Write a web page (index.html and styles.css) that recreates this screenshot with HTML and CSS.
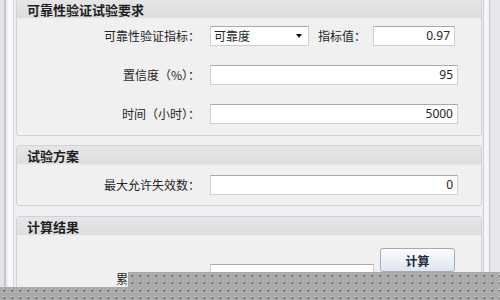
FILE: index.html
```html
<!DOCTYPE html>
<html lang="zh-CN">

<head>
    <meta charset="UTF-8" />
    <title>可靠性验证试验</title>
    <link rel="stylesheet" href="styles.css">
</head>

<body>
    <div id="window">
        <div class="edge-left"></div>

        <div id="content">
            <section class="group first">
                <div class="group-title">可靠性验证试验要求</div>
                <div class="group-body">
                    <div class="row">
                        <span class="label">可靠性验证指标：</span>
                        <div class="select">可靠度<span class="caret"></span></div>
                        <span class="label-inline">指标值：</span>
                        <div class="field short">0.97</div>
                    </div>
                    <div class="row">
                        <span class="label">置信度（%）：</span>
                        <div class="field wide">95</div>
                    </div>
                    <div class="row">
                        <span class="label">时间（小时）：</span>
                        <div class="field wide">5000</div>
                    </div>
                </div>
            </section>

            <section class="group second">
                <div class="group-title">试验方案</div>
                <div class="group-body">
                    <div class="row">
                        <span class="label">最大允许失效数：</span>
                        <div class="field wide">0</div>
                    </div>
                </div>
            </section>

            <section class="group third">
                <div class="group-title">计算结果</div>
                <div class="group-body result">
                    <span class="label">累积失效概率：</span>
                    <div class="field result-field"></div>
                    <button class="calc">计算</button>
                </div>
            </section>
        </div>

        <div class="edge-right"></div>

        <svg class="veil" width="500" height="28" viewBox="0 0 500 28">
            <defs>
                <pattern id="dots" width="8" height="7.5" patternUnits="userSpaceOnUse">
                    <rect width="8" height="7.5" fill="#ababab" />
                    <rect x="3" y="2" width="1" height="1" fill="#ffffff" />
                    <rect x="4" y="3" width="1" height="1" fill="#1a1a1a" />
                    <rect x="3" y="3" width="1" height="1" fill="#555555" />
                </pattern>
            </defs>
            <polygon points="128,0 500,0 500,28 0,28 0,15 128,15" fill="url(#dots)" />
        </svg>
    </div>
</body>

</html>
```

FILE: styles.css
```css
* {
    box-sizing: border-box;
    margin: 0;
    padding: 0;
}

body {
    width: 500px;
    height: 300px;
    overflow: hidden;
    background-color: #f0f0f2;
    font-family: "Noto Sans CJK SC", "Noto Sans", sans-serif;
    font-size: 12px;
    color: #262626;
}

#window {
    position: relative;
    display: flex;
    height: 300px;
}

.edge-left {
    width: 16px;
    flex-shrink: 0;
    background: linear-gradient(to right,
            #e4e4ea 0 4px, #c6c6ce 4px 6px, #ececf1 6px 8px,
            #f8f8fb 8px 13px, #d6d6dc 13px 14px, #ededf1 14px 16px);
}

.edge-right {
    width: 18px;
    flex-shrink: 0;
    background: linear-gradient(to right,
            #ececf0 0 1px, #cdcdd4 1px 2px, #f6f6f9 2px 7px,
            #c4c4cc 7px 8px, #e6e6ec 8px 18px);
}

#content {
    flex: 1;
    display: flex;
    flex-direction: column;
}

.group {
    border: 1px solid #d2d2d6;
    border-radius: 3px;
    background-color: #f0f0f1;
}

.group.first {
    margin-top: -1px;
}

.group.second {
    margin-top: 9px;
}

.group.third {
    margin-top: 10px;
}

.group-title {
    height: 19px;
    line-height: 19px;
    padding-left: 10px;
    font-size: 13px;
    font-weight: bold;
    color: #1e1e1e;
    background: linear-gradient(#e6e6e8, #dededf);
    border-bottom: 1px solid #ececee;
}

.group-body {
    display: flex;
    flex-direction: column;
    gap: 19px;
    padding: 10px 0 10px;
}

.group.first .group-body {
    padding: 7px 0 11px;
}

.row {
    display: flex;
    align-items: center;
    height: 20px;
}

.label {
    width: 183px;
    margin-right: 10px;
    text-align: right;
    line-height: 20px;
    white-space: nowrap;
}

.label-inline {
    margin: 0 7px 0 9px;
    line-height: 20px;
}

.field,
.select {
    height: 20px;
    line-height: 18px;
    background-color: #ffffff;
    border: 1px solid #cfcfd2;
    border-top-color: #a9a9ad;
    font-family: "Noto Sans", sans-serif;
    font-size: 12px;
}

.field {
    text-align: right;
    padding-right: 4px;
}

.field.wide {
    width: 248px;
}

.field.short {
    width: 82px;
}

.select {
    position: relative;
    width: 99px;
    padding-left: 3px;
    font-family: "Noto Sans CJK SC", sans-serif;
}

.caret {
    position: absolute;
    right: 6px;
    top: 7px;
    border-left: 3px solid transparent;
    border-right: 3px solid transparent;
    border-top: 4px solid #111111;
}

.result {
    display: grid;
    grid-template-columns: 183px 164px 75px;
    column-gap: 10px;
    align-items: start;
}

.result .label {
    margin-top: 23px;
    margin-right: 0;
    width: auto;
}

.result-field {
    margin-top: 18px;
    height: 26px;
}

.calc {
    justify-self: start;
    width: 75px;
    height: 24px;
    margin: 2px 0 0 -4px;
    font-family: "Noto Sans CJK SC", sans-serif;
    font-size: 12px;
    font-weight: bold;
    color: #23283a;
    background: linear-gradient(#fbfcfe, #dfe5f0);
    border: 1px solid #a2abba;
    border-radius: 3px;
}

.veil {
    position: absolute;
    left: 0;
    bottom: 0;
}
```
